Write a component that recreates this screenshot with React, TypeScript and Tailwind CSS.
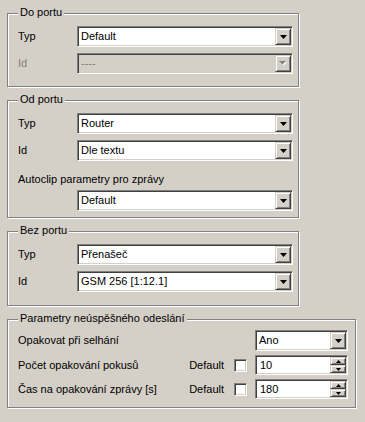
import type { ReactNode } from "react";

const sunken =
  "border border-t-[#808080] border-l-[#808080] border-b-white border-r-white shadow-[inset_1px_1px_0_#404040,inset_-1px_-1px_0_#d4d0c8]";
const raised =
  "border border-t-[#d4d0c8] border-l-[#d4d0c8] border-b-[#404040] border-r-[#404040] shadow-[inset_1px_1px_0_#fff,inset_-1px_-1px_0_#808080] bg-[#d4d0c8]";

function GroupBox({ title, className = "", children }: { title: string; className?: string; children: ReactNode }) {
  return (
    <div className={`relative border border-[#808080] shadow-[inset_1px_1px_0_#fff,1px_1px_0_#fff] ${className}`}>
      <span className="absolute left-[10px] top-[-8px] bg-[#d4d0c8] px-[2px] leading-[13px]">{title}</span>
      {children}
    </div>
  );
}

function Arrow({ disabled }: { disabled?: boolean }) {
  if (disabled) {
    return (
      <svg width="8" height="5" viewBox="0 0 8 5">
        <polygon points="1,1 8,1 4.5,4.5" fill="#fff" />
        <polygon points="0,0 7,0 3.5,3.5" fill="#808080" />
      </svg>
    );
  }
  return (
    <svg width="7" height="4" viewBox="0 0 7 4">
      <polygon points="0,0 7,0 3.5,4" fill="#000" />
    </svg>
  );
}

function Combo({ value, disabled, className = "" }: { value: string; disabled?: boolean; className?: string }) {
  return (
    <div className={`flex h-[21px] p-[1px] ${sunken} ${disabled ? "bg-[#d4d0c8]" : "bg-white"} ${className}`}>
      <span className={`flex-1 pl-[2px] leading-[17px] ${disabled ? "text-[#808080]" : ""}`}>{value}</span>
      <div className={`flex w-[16px] items-center justify-center ${raised}`}>
        <Arrow disabled={disabled} />
      </div>
    </div>
  );
}

function Spin({ value }: { value: string }) {
  return (
    <div className={`flex h-[20px] w-[93px] bg-white p-[1px] ${sunken}`}>
      <span className="flex-1 pl-[3px] leading-[16px]">{value}</span>
      <div className="flex w-[16px] flex-col">
        <div className={`flex h-[8px] items-center justify-center ${raised}`}>
          <svg width="5" height="3" viewBox="0 0 5 3">
            <polygon points="2.5,0 5,3 0,3" fill="#000" />
          </svg>
        </div>
        <div className={`flex h-[8px] items-center justify-center ${raised}`}>
          <svg width="5" height="3" viewBox="0 0 5 3">
            <polygon points="0,0 5,0 2.5,3" fill="#000" />
          </svg>
        </div>
      </div>
    </div>
  );
}

function Row({ label, value, disabled }: { label: string; value: string; disabled?: boolean }) {
  return (
    <div className="flex items-center">
      <span className={`w-[59px] ${disabled ? "text-[#808080]" : ""}`}>{label}</span>
      <Combo value={value} disabled={disabled} className="w-[216px]" />
    </div>
  );
}

function Checkbox() {
  return <div className={`h-[13px] w-[13px] bg-white ${sunken}`} />;
}

export default function App() {
  return (
    <div className="h-[422px] w-[365px] bg-[#d4d0c8] pl-[7px] pt-[13px] font-['Liberation_Sans',Arial,sans-serif] text-[11px] text-black">
      <GroupBox title="Do portu" className="w-[292px]">
        <div className="flex flex-col gap-[6px] pb-[12px] pl-[10px] pt-[12px]">
          <Row label="Typ" value="Default" />
          <Row label="Id" value="----" disabled />
        </div>
      </GroupBox>

      <GroupBox title="Od portu" className="mt-[13px] w-[292px]">
        <div className="flex flex-col pb-[6px] pl-[10px] pt-[12px]">
          <div className="flex flex-col gap-[6px]">
            <Row label="Typ" value="Router" />
            <Row label="Id" value="Dle textu" />
          </div>
          <span className="mb-[4px] mt-[12px] leading-[13px]">Autoclip parametry pro zprávy</span>
          <div className="flex">
            <Combo value="Default" className="ml-[59px] w-[216px]" />
          </div>
        </div>
      </GroupBox>

      <GroupBox title="Bez portu" className="mt-[13px] w-[292px]">
        <div className="flex flex-col gap-[6px] pb-[13px] pl-[10px] pt-[12px]">
          <Row label="Typ" value="Přenašeč" />
          <Row label="Id" value="GSM 256 [1:12.1]" />
        </div>
      </GroupBox>

      <GroupBox title="Parametry neúspěšného odeslání" className="mt-[13px] w-[349px]">
        <div className="flex flex-col gap-[4px] pb-[8px] pl-[10px] pr-[7px] pt-[10px]">
          <div className="flex items-center">
            <span className="flex-1">Opakovat při selhání</span>
            <Combo value="Ano" className="w-[93px]" />
          </div>
          <div className="flex items-center">
            <span className="flex-1">Počet opakování pokusů</span>
            <span className="mr-[10px]">Default</span>
            <Checkbox />
            <div className="ml-[8px]">
              <Spin value="10" />
            </div>
          </div>
          <div className="flex items-center">
            <span className="flex-1">Čas na opakování zprávy [s]</span>
            <span className="mr-[10px]">Default</span>
            <Checkbox />
            <div className="ml-[8px]">
              <Spin value="180" />
            </div>
          </div>
        </div>
      </GroupBox>
    </div>
  );
}
